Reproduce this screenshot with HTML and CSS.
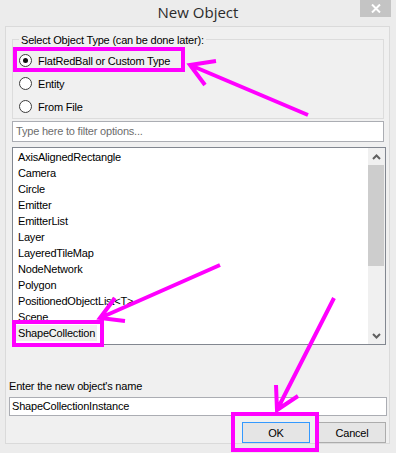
FILE: index.html
```html
<!DOCTYPE html>
<html>
<head>
<meta charset="utf-8">
<link rel="stylesheet" href="styles.css">
</head>
<body>
<div class="window">
  <div class="titlebar">
    <span></span>
    <span class="title">New Object</span>
    <span class="close-cell">
      <span class="close">
        <svg width="10" height="9" viewBox="0 0 10 9"><path d="M1 0.5 L9 8.5 M9 0.5 L1 8.5" stroke="#fff" stroke-width="2" fill="none"/></svg>
      </span>
    </span>
  </div>
  <div class="client">
    <div class="group">
      <span class="legend">Select Object Type (can be done later):</span>
      <div class="opt"><span class="radio checked"></span><span>FlatRedBall or Custom Type</span></div>
      <div class="opt"><span class="radio"></span><span>Entity</span></div>
      <div class="opt"><span class="radio"></span><span>From File</span></div>
    </div>
    <div class="filter">Type here to filter options...</div>
    <div class="listbox">
      <ul class="items">
        <li>AxisAlignedRectangle</li>
        <li>Camera</li>
        <li>Circle</li>
        <li>Emitter</li>
        <li>EmitterList</li>
        <li>Layer</li>
        <li>LayeredTileMap</li>
        <li>NodeNetwork</li>
        <li>Polygon</li>
        <li>PositionedObjectList&lt;T&gt;</li>
        <li>Scene</li>
        <li><span class="sel">ShapeCollection</span></li>
      </ul>
      <div class="scrollbar">
        <div class="sb-btn">
          <svg width="9" height="6" viewBox="0 0 9 6"><path d="M1 5 L4.5 1.5 L8 5" stroke="#606060" stroke-width="2" fill="none"/></svg>
        </div>
        <div class="thumb"></div>
        <div class="track"></div>
        <div class="sb-btn">
          <svg width="9" height="6" viewBox="0 0 9 6"><path d="M1 1 L4.5 4.5 L8 1" stroke="#606060" stroke-width="2" fill="none"/></svg>
        </div>
      </div>
    </div>
    <div class="name-label">Enter the new object's name</div>
    <div class="name-box">ShapeCollectionInstance</div>
    <div class="buttons">
      <span class="btn default">OK</span>
      <span class="btn">Cancel</span>
    </div>
  </div>
  <svg class="annot" width="396" height="453" viewBox="0 0 396 453">
    <g stroke="#ff00ff" stroke-width="4" fill="none">
      <rect x="15" y="49" width="168" height="21"/>
      <rect x="14" y="322" width="88" height="23"/>
      <rect x="233" y="414" width="84" height="36"/>
      <path d="M308 115 L190 65 M216 61 L190 65 L205 85"/>
      <path d="M220 265 L100 318 M115 298 L100 318 L125 321"/>
      <path d="M334 298 L277 410 M276 385 L277 410 L298 396"/>
    </g>
  </svg>
</div>
</body>
</html>
```
FILE: styles.css
```css
* { box-sizing: border-box; }
html, body { margin: 0; padding: 0; }
body {
  background: #ececec;
  font-family: "Liberation Sans", Arial, sans-serif;
  font-size: 11px;
  letter-spacing: -0.2px;
  color: #000;
}
.window {
  position: relative;
  width: 396px;
  height: 453px;
  background: #ececec;
  overflow: hidden;
}
.titlebar {
  height: 26px;
  display: grid;
  grid-template-columns: 1fr auto 1fr;
  align-items: start;
}
.title {
  font-family: "Open Sans", "Noto Sans", sans-serif;
  font-size: 15px;
  letter-spacing: 0;
  line-height: 24px;
  color: #2b2b2b;
}
.close-cell {
  justify-self: end;
  margin-right: 5px;
}
.close {
  width: 31px;
  height: 17px;
  background: #c4c4c4;
  display: flex;
  align-items: center;
  justify-content: center;
}
.client {
  margin: 0 6px 0 5px;
  height: 418px;
  background: #f0f0f0;
  border: 1px solid #dadada;
}
.group {
  margin: 12px 0 0 6px;
  width: 372px;
  height: 80px;
  border: 1px solid #dcdcdc;
  display: flex;
  flex-direction: column;
}
.legend {
  align-self: flex-start;
  margin: -7px 0 2px 6px;
  padding: 0 2px;
  line-height: 14px;
  background: #f0f0f0;
}
.opt {
  height: 23px;
  display: flex;
  align-items: center;
  padding-left: 6px;
  gap: 6px;
}
.radio {
  width: 13px;
  height: 13px;
  border-radius: 50%;
  border: 1px solid #3c3c3c;
  background: #fff;
  display: flex;
  align-items: center;
  justify-content: center;
}
.radio.checked::after {
  content: "";
  width: 5px;
  height: 5px;
  border-radius: 50%;
  background: #111;
}
.filter {
  margin: 2px 0 0 6px;
  width: 372px;
  height: 21px;
  border: 1px solid #abadb3;
  background: #fff;
  color: #6d6d6d;
  padding-left: 3px;
  line-height: 19px;
}
.listbox {
  margin: 5px 0 0 6px;
  width: 374px;
  height: 198px;
  border: 1px solid #828790;
  background: #fff;
  display: flex;
}
.items {
  list-style: none;
  margin: 0;
  padding: 1px 0 0 0;
  flex: 1;
}
.items li {
  height: 16px;
  line-height: 16px;
  padding-left: 5px;
  white-space: nowrap;
}
.sel {
  background: #f0f0f0;
  display: inline-block;
  margin-left: -2px;
  padding: 0 2px;
}
.scrollbar {
  width: 17px;
  background: #f0f0f0;
  display: flex;
  flex-direction: column;
}
.sb-btn {
  height: 17px;
  display: flex;
  align-items: center;
  justify-content: center;
}
.thumb {
  height: 101px;
  margin-right: 1px;
  background: #cdcdcd;
}
.track { flex: 1; }
.name-label {
  margin: 34px 0 0 3px;
  line-height: 14px;
}
.name-box {
  margin: 4px 0 0 3px;
  width: 378px;
  height: 19px;
  border: 1px solid #abadb3;
  background: #fff;
  padding-left: 2px;
  line-height: 17px;
}
.buttons {
  margin: 6px 3px 0 0;
  display: flex;
  justify-content: flex-end;
  gap: 8px;
}
.btn {
  width: 68px;
  height: 21px;
  border: 1px solid #acacac;
  background: #e5e5e5;
  display: flex;
  align-items: center;
  justify-content: center;
}
.btn.default {
  border-color: #3399ff;
}
.annot {
  position: absolute;
  left: 0;
  top: 0;
  pointer-events: none;
}
```
